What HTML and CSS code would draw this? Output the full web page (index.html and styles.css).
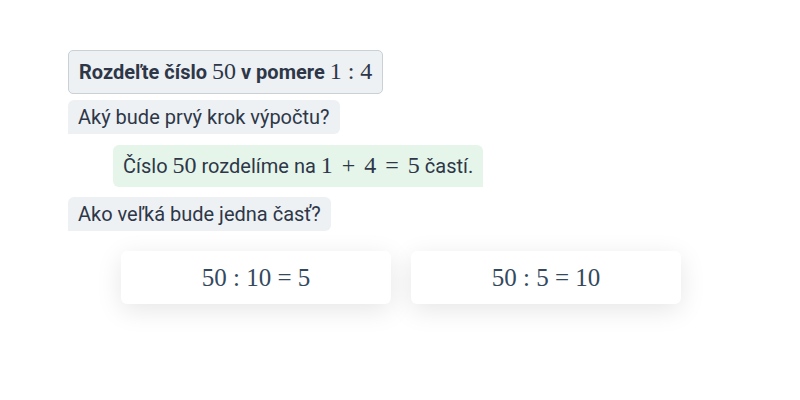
FILE: index.html
```html
<!DOCTYPE html>
<html lang="sk">
<head>
    <meta charset="UTF-8">
    <meta name="viewport" content="width=device-width, initial-scale=1.0">
    <title>Pomer</title>
    <link rel="stylesheet" href="styles.css">
</head>
<body>
    <div class="chat">
        <div class="bubble task">
            <b>Rozdeľte číslo</b> <span class="math">50</span> <b>v pomere</b> <span class="math">1 : 4</span>
        </div>

        <div class="bubble question">Aký bude prvý krok výpočtu?</div>

        <div class="bubble answer">
            Číslo <span class="math">50</span> rozdelíme na <span class="math wide">1 + 4 = 5</span> častí.
        </div>

        <div class="bubble question">Ako veľká bude jedna časť?</div>

        <div class="options">
            <div class="option"><span class="math">50 : 10 = 5</span></div>
            <div class="option"><span class="math">50 : 5 = 10</span></div>
        </div>
    </div>
</body>
</html>
```

FILE: styles.css
```css
body {
    margin: 0;
    background: #ffffff;
    font-family: Roboto, 'Liberation Sans', Arial, sans-serif;
    color: #2d3748;
}
.chat {
    display: flex;
    flex-direction: column;
    align-items: flex-start;
    padding: 50px 0 60px 68px;
}
.bubble {
    font-size: 20px;
    line-height: 22px;
    padding: 6px 10px;
    background: #edf1f3;
    border-radius: 6px 6px 6px 0;
    white-space: nowrap;
}
.task {
    padding: 9px 10px 10px;
    border: 1px solid #c9d0d6;
    border-radius: 5px;
    margin-bottom: 6px;
}
.question {
    margin-bottom: 11px;
}
.answer {
    margin-left: 45px;
    margin-bottom: 10px;
    padding: 9px 10px 10px;
    background: #e5f5ea;
    border-radius: 6px 6px 0 6px;
}
.math {
    font-family: 'Liberation Serif', 'Times New Roman', serif;
    font-size: 24px;
    line-height: 22px;
}
.math.wide {
    word-spacing: 3px;
}
.options {
    display: flex;
    gap: 20px;
    margin: 9px 0 0 53px;
}
.option {
    width: 270px;
    height: 53px;
    display: flex;
    align-items: center;
    justify-content: center;
    background: #ffffff;
    border-radius: 6px;
    box-shadow: 0 6px 26px rgba(0, 0, 0, 0.1);
}
.option .math {
    font-size: 25px;
    color: #34495e;
}
```
